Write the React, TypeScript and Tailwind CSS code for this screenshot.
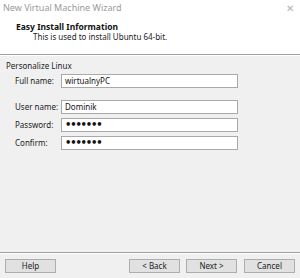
import React from "react";

const font = { fontFamily: '"Noto Sans", "Open Sans", sans-serif' };

function Field({ label, value, mt, dots }: { label: string; value: string; mt: string; dots?: boolean }) {
  return (
    <div className={`flex items-center ${mt}`}>
      <div className="w-[46px] ml-[15px] text-[8px] leading-[10px] text-[#222]">{label}</div>
      <div className="w-[177px] h-[14px] bg-white border border-[#a9a9a9] flex items-center pl-[3px] overflow-hidden">
        {dots ? (
          <span className="text-[10px] leading-[10px] font-bold text-[#111]" style={{ fontFamily: '"DejaVu Sans", sans-serif', letterSpacing: "-1.2px" }}>{value}</span>
        ) : (
          <span className="text-[8px] leading-[10px] text-[#111]">{value}</span>
        )}
      </div>
    </div>
  );
}

function Btn({ children }: { children: React.ReactNode }) {
  return (
    <div className="w-[51px] h-[14px] bg-[#e1e1e1] border border-[#adadad] flex items-center justify-center text-[8px] leading-[10px] text-[#222]">
      {children}
    </div>
  );
}

export default function App() {
  return (
    <div className="w-[300px] h-[278px] bg-[#f0f0f0] flex flex-col overflow-hidden" style={font}>
      <div className="bg-white h-[54px] flex flex-col">
        <div className="h-[16px] flex items-center justify-between pl-[3px] pr-[6px]">
          <span className="text-[9px] leading-[12px] text-[#9a9a9a]">New Virtual Machine Wizard</span>
          <span className="text-[10px] leading-[12px] text-[#b0b0b0]">✕</span>
        </div>
        <div className="pl-[16px] mt-[5px] text-[8.5px] leading-[11px] font-bold text-[#111]">Easy Install Information</div>
        <div className="pl-[33px] text-[8px] leading-[10px] text-[#222]">This is used to install Ubuntu 64-bit.</div>
      </div>
      <div className="h-[1px] bg-[#a0a0a0]" />
      <div className="h-[1px] bg-white" />
      <div className="flex-1 flex flex-col">
        <div className="ml-[6px] mt-[5px] text-[8px] leading-[10px] text-[#222]">Personalize Linux</div>
        <Field label="Full name:" value="wirtualnyPC" mt="mt-[3px]" />
        <Field label="User name:" value="Dominik" mt="mt-[12px]" />
        <Field label="Password:" value="•••••••" mt="mt-[4px]" dots />
        <Field label="Confirm:" value="•••••••" mt="mt-[4px]" dots />
      </div>
      <div className="h-[1px] bg-[#a0a0a0]" />
      <div className="h-[1px] bg-white" />
      <div className="h-[24px] flex items-start pt-[5px] px-[5px]">
        <Btn>Help</Btn>
        <div className="flex-1" />
        <Btn>&lt; Back</Btn>
        <div className="w-[6px]" />
        <Btn>Next &gt;</Btn>
        <div className="w-[7px]" />
        <Btn>Cancel</Btn>
      </div>
    </div>
  );
}
